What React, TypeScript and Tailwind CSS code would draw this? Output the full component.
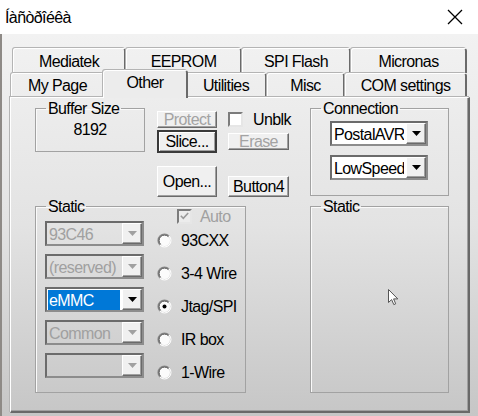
import React from "react";

const FONT = "font-['Liberation_Sans',Arial,sans-serif] text-[16px] tracking-[-0.6px] leading-[17px]";

type TabProps = { label: string; w: string; selected?: boolean };

const Tab = ({ label, w, selected }: TabProps) => {
  if (selected) {
    return (
      <div
        className={`${w} relative z-10 -mx-[2px] -mb-px flex h-[28px] items-start justify-center rounded-t-[3px] border-l border-t border-l-white border-t-white border-r-2 border-r-[#6a6a6a] bg-[#ececec] pt-[3px] shadow-[-1px_-1px_0_#b4b4b4]`}
      >
        {label}
      </div>
    );
  }
  return (
    <div
      className={`${w} flex h-full items-center justify-center rounded-t-[3px] border-l border-t border-l-white border-t-white border-r-2 border-r-[#6a6a6a] shadow-[-1px_-1px_0_#b4b4b4]`}
    >
      {label}
    </div>
  );
};

type BtnProps = { label: string; h: string; disabled?: boolean; isDefault?: boolean; className?: string };

const Btn = ({ label, h, disabled, isDefault, className = "" }: BtnProps) => (
  <div
    className={`${h} ${className} flex w-full items-center justify-center bg-[#f0f0f0] ${
      isDefault
        ? "border-2 border-[#3a3a3a] shadow-[inset_1px_1px_0_#fff,inset_-1px_-1px_0_#a0a0a0]"
        : "border border-t-white border-l-white border-r-[#6a6a6a] border-b-[#6a6a6a] shadow-[inset_-1px_-1px_0_#a0a0a0]"
    } ${disabled ? "text-[#a3a3a3]" : "text-black"}`}
  >
    {label}
  </div>
);

const Arrow = ({ disabled }: { disabled?: boolean }) => (
  <div className="flex h-full w-[20px] shrink-0 items-center justify-center border border-t-white border-l-white border-r-[#6a6a6a] border-b-[#6a6a6a] bg-[#f0f0f0] shadow-[inset_-1px_-1px_0_#a0a0a0]">
    <svg width="9" height="5" viewBox="0 0 9 5">
      <polygon points="0,0 9,0 4.5,5" fill={disabled ? "#a0a0a0" : "#000"} />
    </svg>
  </div>
);

type ComboProps = { text?: string; disabled?: boolean; selected?: boolean; w: string };

const Combo = ({ text = "", disabled, selected, w }: ComboProps) => (
  <div
    className={`${w} flex h-[25px] border-2 border-t-[#6b6b6b] border-l-[#6b6b6b] border-r-[#8c8c8c] border-b-[#8c8c8c] ${
      disabled ? "bg-transparent" : "bg-white"
    }`}
  >
    <div className="flex min-w-0 flex-1 pt-px pl-px pr-[2px]">
      <div
        className={`flex flex-1 items-center overflow-hidden whitespace-nowrap pl-[1px] ${
          selected ? "bg-[#0078d7] text-white" : disabled ? "text-[#a0a0a0]" : "text-black"
        }`}
      >
        {text}
      </div>
    </div>
    <Arrow disabled={disabled} />
  </div>
);

const Check = ({ checked, disabled }: { checked?: boolean; disabled?: boolean }) => (
  <div
    className={`flex h-[15px] w-[15px] shrink-0 items-center justify-center border-2 border-t-[#7c7c7c] border-l-[#7c7c7c] border-r-[#e6e6e6] border-b-[#e6e6e6] ${
      disabled ? "bg-[#ececec]" : "bg-white"
    }`}
  >
    {checked && (
      <svg width="9" height="8" viewBox="0 0 9 8">
        <path d="M0.8 3.8 L3.3 6.3 L8.2 1" fill="none" stroke={disabled ? "#9a9a9a" : "#000"} strokeWidth="1.6" />
      </svg>
    )}
  </div>
);

const Radio = ({ label, checked }: { label: string; checked?: boolean }) => (
  <div className="flex h-[33px] items-center">
    <svg width="15" height="15" viewBox="0 0 15 15" className="shrink-0">
      <circle cx="7.5" cy="7.5" r="5.5" fill="#fbfbfb" />
      <path d="M12.1 2.9 A6.5 6.5 0 0 0 2.9 12.1" fill="none" stroke="#8a8a8a" strokeWidth="1.2" />
      <path d="M11.4 3.6 A5.5 5.5 0 0 0 3.6 11.4" fill="none" stroke="#3c3c3c" strokeWidth="1" />
      <path d="M12.1 2.9 A6.5 6.5 0 0 1 2.9 12.1" fill="none" stroke="#ffffff" strokeWidth="1" />
      {checked && <circle cx="7.5" cy="7.5" r="2" fill="#000" />}
    </svg>
    <span className="ml-[9px] whitespace-nowrap">{label}</span>
  </div>
);

type GroupProps = { title: string; className: string; children?: React.ReactNode };

const Group = ({ title, className, children }: GroupProps) => (
  <fieldset className={`${className} relative border border-[#a2a2a2] shadow-[inset_1px_1px_0_#fafafa]`}>
    <legend className="ml-[10px] px-[2px]">{title}</legend>
    {children}
  </fieldset>
);

export default function App() {
  return (
    <div className={`${FONT} flex h-[416px] w-[478px] flex-col overflow-hidden text-black`}>
      <div className="flex h-[34px] shrink-0 items-center justify-between bg-white pl-[5px] pr-[15px]">
        <span className="pt-px">Íàñòðîéêà</span>
        <svg width="16" height="16" viewBox="0 0 16 16">
          <path d="M1 1 L15 15 M15 1 L1 15" stroke="#000" strokeWidth="1.3" />
        </svg>
      </div>

      <div className="flex flex-1 flex-col border-l-2 border-l-[#8e8a86] bg-linear-to-b from-[#f2f2f2] via-[#e3e3e3] to-[#c6c6c6] pl-[8px] pt-[14px]">
        <div className="flex h-[25px] pl-[3px]">
          <Tab label="Mediatek" w="w-[113px]" />
          <Tab label="EEPROM" w="w-[116px]" />
          <Tab label="SPI Flash" w="w-[109px]" />
          <Tab label="Micronas" w="w-[116px]" />
        </div>
        <div className="flex h-[24px] items-end pl-px">
          <Tab label="My Page" w="w-[94px]" />
          <Tab label="Other" w="w-[85px]" selected />
          <Tab label="Utilities" w="w-[81px]" />
          <Tab label="Misc" w="w-[78px]" />
          <Tab label="COM settings" w="w-[122px]" />
        </div>

        <div className="flex h-[316px] w-[460px] border-l border-t border-l-white border-t-white border-r-2 border-b-2 border-r-[#696969] border-b-[#696969] pl-[24px] pt-[2px] shadow-[inset_-1px_-1px_0_#a0a0a0,-1px_-1px_0_#b4b4b4]">
          <div className="flex w-[255px] flex-col">
            <div className="flex h-[97px]">
              <Group title="Buffer Size" className="h-[52px] w-[110px]">
                <div className="pt-[4px] text-center">8192</div>
              </Group>
              <div className="ml-[12px] flex w-[60px] flex-col">
                <Btn label="Protect" h="h-[17px]" disabled className="mt-[11px]" />
                <Btn label="Slice..." h="h-[23px]" isDefault className="mt-[2px]" />
                <Btn label="Open..." h="h-[31px]" className="mt-[13px]" />
              </div>
              <div className="ml-[11px] flex w-[61px] flex-col">
                <div className="mt-[12px] flex h-[14px] items-center">
                  <Check />
                  <span className="ml-[10px]">Unblk</span>
                </div>
                <Btn label="Erase" h="h-[17px]" disabled className="mt-[7px]" />
                <Btn label="Button4" h="h-[21px]" className="mt-[26px]" />
              </div>
            </div>

            <Group title="Static" className="mt-px h-[195px] w-[211px]">
              <div className="flex">
                <div className="ml-[9px] mt-[6px] flex flex-col gap-[8px]">
                  <Combo text="93C46" disabled w="w-[99px]" />
                  <Combo text="(reserved)" disabled w="w-[99px]" />
                  <Combo text="eMMC" selected w="w-[99px]" />
                  <Combo text="Common" disabled w="w-[99px]" />
                  <Combo disabled w="w-[99px]" />
                </div>
                <div className="ml-[13px] -mt-[7px] flex flex-col">
                  <div className="flex h-[16px] items-center pl-[20px] text-[#a0a0a0]">
                    <Check checked disabled />
                    <span className="ml-[8px]">Auto</span>
                  </div>
                  <Radio label="93CXX" />
                  <Radio label="3-4 Wire" />
                  <Radio label="Jtag/SPI" checked />
                  <Radio label="IR box" />
                  <Radio label="1-Wire" />
                </div>
              </div>
            </Group>
          </div>

          <div className="ml-[20px] flex w-[139px] flex-col">
            <Group title="Connection" className="h-[96px] w-[139px]">
              <div className="mt-[4px] flex flex-col gap-[9px] pl-[19px]">
                <Combo text="PostalAVR" w="w-[98px]" />
                <Combo text="LowSpeed" w="w-[98px]" />
              </div>
            </Group>
            <Group title="Static" className="mt-[2px] h-[195px] w-[139px]">
              <svg
                width="11"
                height="17"
                viewBox="0 0 11 17"
                className="absolute left-[77px] top-[74px]"
              >
                <path
                  d="M0.5 0.5 L0.5 13.5 L3.6 10.6 L5.8 15.6 L7.7 14.8 L5.6 9.9 L9.8 9.9 Z"
                  fill="#fff"
                  stroke="#555"
                  strokeWidth="1"
                />
              </svg>
            </Group>
          </div>
        </div>
      </div>
    </div>
  );
}
